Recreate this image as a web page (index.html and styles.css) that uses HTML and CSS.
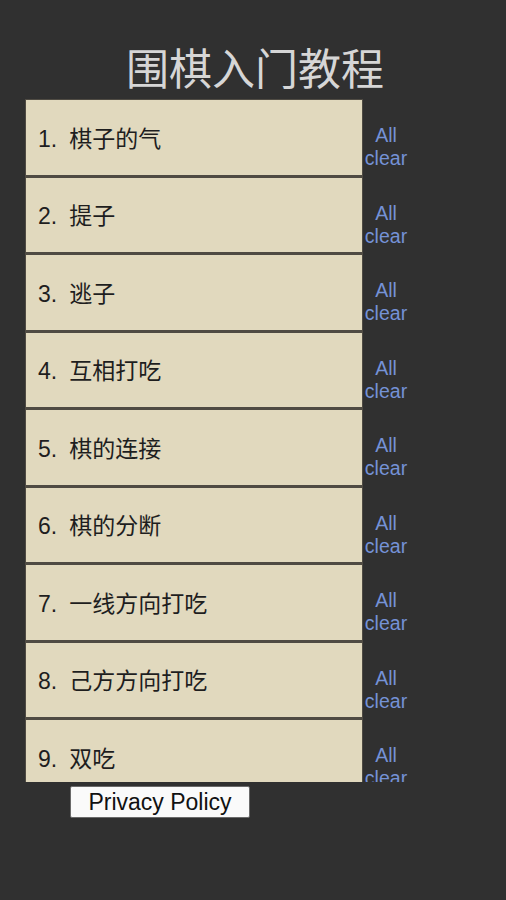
FILE: index.html
```html
<!DOCTYPE html>
<html lang="zh">
<head>
<meta charset="utf-8">
<title>围棋入门教程</title>
<link rel="stylesheet" href="styles.css">
</head>
<body>
<div class="page">
  <h1 class="title">围棋入门教程</h1>
  <div class="lessons">
    <div class="lesson"><div class="lesson-name"><span class="label"><span class="num">1.</span>棋子的气</span></div><a class="status">All<br>clear</a></div>
    <div class="lesson"><div class="lesson-name"><span class="label"><span class="num">2.</span>提子</span></div><a class="status">All<br>clear</a></div>
    <div class="lesson"><div class="lesson-name"><span class="label"><span class="num">3.</span>逃子</span></div><a class="status">All<br>clear</a></div>
    <div class="lesson"><div class="lesson-name"><span class="label"><span class="num">4.</span>互相打吃</span></div><a class="status">All<br>clear</a></div>
    <div class="lesson"><div class="lesson-name"><span class="label"><span class="num">5.</span>棋的连接</span></div><a class="status">All<br>clear</a></div>
    <div class="lesson"><div class="lesson-name"><span class="label"><span class="num">6.</span>棋的分断</span></div><a class="status">All<br>clear</a></div>
    <div class="lesson"><div class="lesson-name"><span class="label"><span class="num">7.</span>一线方向打吃</span></div><a class="status">All<br>clear</a></div>
    <div class="lesson"><div class="lesson-name"><span class="label"><span class="num">8.</span>己方方向打吃</span></div><a class="status">All<br>clear</a></div>
    <div class="lesson"><div class="lesson-name"><span class="label"><span class="num">9.</span>双吃</span></div><a class="status">All<br>clear</a></div>
  </div>
  <button class="privacy">Privacy Policy</button>
</div>
</body>
</html>
```

FILE: styles.css
```css
html, body {
  margin: 0;
  padding: 0;
  background: #303030;
}

.page {
  width: 506px;
  height: 900px;
  display: flex;
  flex-direction: column;
  align-items: flex-start;
  font-family: "Liberation Sans", "Noto Sans CJK SC", sans-serif;
}

.title {
  align-self: stretch;
  margin: 0;
  padding-top: 40px;
  padding-left: 4px;
  height: 99px;
  box-sizing: border-box;
  text-align: center;
  font-family: "Noto Sans CJK SC", sans-serif;
  font-weight: 400;
  font-size: 43px;
  line-height: 52px;
  color: #d6d6d6;
}

.lessons {
  margin-left: 25px;
  width: 390px;
  height: 683px;
  overflow: hidden;
  display: flex;
  flex-direction: column;
}

.lesson {
  flex: 0 0 77.5px;
  display: grid;
  grid-template-columns: 338px 46px;
}

.lesson-name {
  background: #e1d9be;
  border: 1px solid #4f4b43;
  border-bottom-width: 2px;
  display: flex;
  align-items: center;
  padding-left: 12px;
  padding-top: 3px;
  font-family: "Liberation Sans", "Noto Sans CJK SC", sans-serif;
  font-size: 23px;
  color: #1e1e1e;
}

.label {
  line-height: 30px;
}

.num {
  margin-right: 12px;
}

.status {
  padding-top: 25px;
  text-align: center;
  font-family: "Liberation Sans", sans-serif;
  font-size: 19.5px;
  line-height: 23px;
  color: #7592d6;
}

.privacy {
  margin-top: 4px;
  margin-left: 70px;
  width: 180px;
  height: 32px;
  padding: 0;
  background: #fafafa;
  border: 1px solid #6a6a6a;
  border-radius: 2px;
  font-family: "Liberation Sans", sans-serif;
  font-size: 23px;
  color: #111;
}
```
